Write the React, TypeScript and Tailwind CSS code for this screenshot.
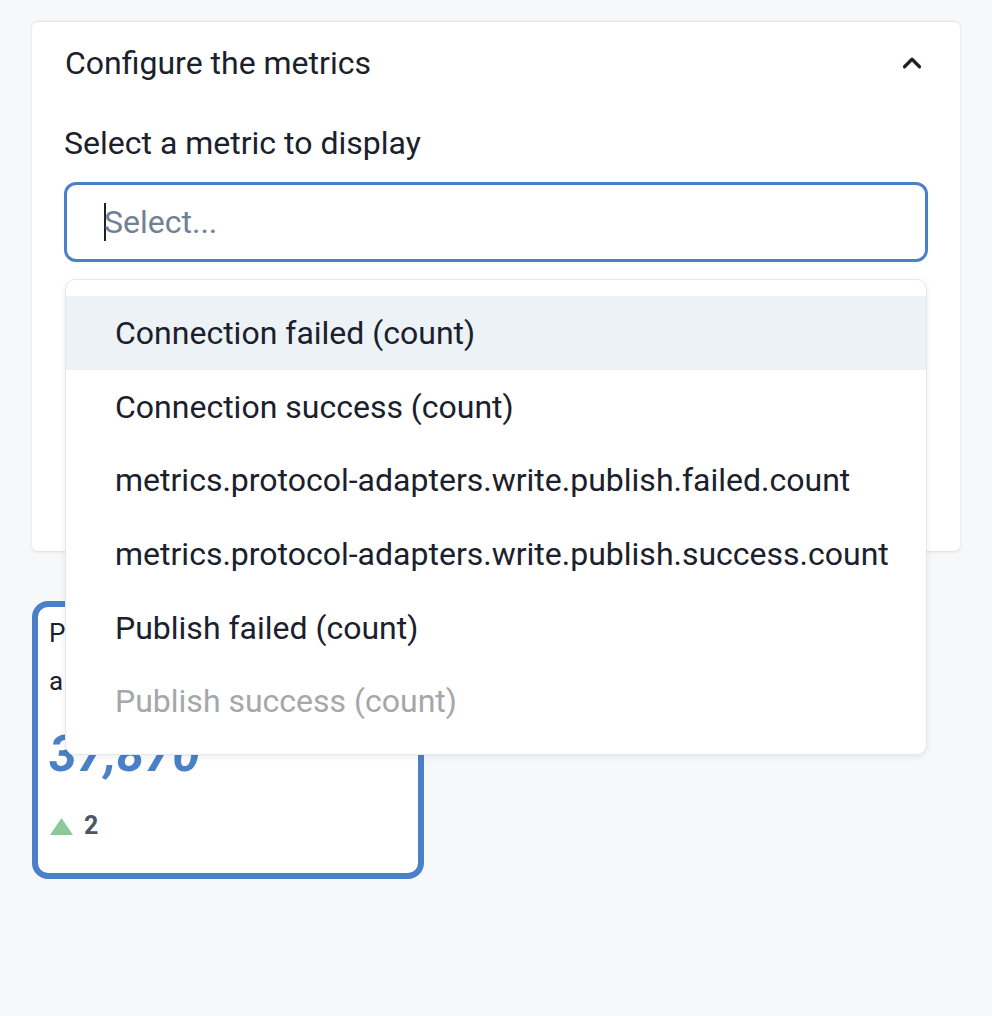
import { ChevronUp } from 'lucide-react'

const options = [
  { label: 'Connection failed (count)', active: true },
  { label: 'Connection success (count)' },
  { label: 'metrics.protocol-adapters.write.publish.failed.count' },
  { label: 'metrics.protocol-adapters.write.publish.success.count' },
  { label: 'Publish failed (count)' },
  { label: 'Publish success (count)', disabled: true },
]

export default function App() {
  return (
    <div
      className="min-h-screen bg-[#f7f8fa] px-[32px] pt-[21px] text-[#1a202c]"
      style={{ fontFamily: 'Roboto, "Liberation Sans", sans-serif' }}
    >
      {/* Configure card */}
      <div className="relative rounded-md border-t border-[#e2e8f0] bg-white shadow-[0_1px_3px_rgba(0,0,0,0.12)]">
        <div className="flex h-[82px] items-center justify-between px-[33px]">
          <span className="text-[32px]">Configure the metrics</span>
          <ChevronUp className="h-[30px] w-[30px] text-[#1a202c]" strokeWidth={2.6} />
        </div>
        <div className="px-[32px] pb-[32px]">
          <div className="mb-[15px] mt-[15px] flex h-[48px] items-center text-[32px]">Select a metric to display</div>
          <div className="flex h-[80px] items-center rounded-[12px] border-[3px] border-[#4a80c8] pl-[37px]">
            <span className="-mr-[2px] h-[38px] w-[2px] bg-[#1a202c]" />
            <span className="text-[32px] text-[#718096]">Select...</span>
          </div>
          <div className="h-[257px]" />

          {/* Dropdown menu */}
          <div className="absolute left-[33px] top-[257px] z-10 w-[862px] rounded-[10px] border border-[#e2e8f0] bg-white py-[16px] shadow-[0_2px_6px_rgba(0,0,0,0.08)]">
            {options.map((o) => (
              <div
                key={o.label}
                className={`flex h-[73.7px] items-center pl-[49px] text-[32px] ${
                  o.active ? 'bg-[#edf2f7]' : ''
                } ${o.disabled ? 'text-[#a5a7ab]' : 'text-[#1a202c]'}`}
              >
                {o.label}
              </div>
            ))}
          </div>
        </div>
      </div>

      {/* Metric card */}
      <div className="mt-[50px] h-[278px] w-[392px] rounded-[16px] border-[6px] border-[#4a80c8] bg-white px-[11px] pt-[2px]">
        <div className="text-[26px] leading-[48px] text-[#1a202c]">
          Publish success (count)
          <br />a modbus adapter
        </div>
        <div className="mt-[21px] text-[50px] font-bold italic leading-[56px] text-[#4a80c8]">37,870</div>
        <div className="mt-[27px] flex h-[34px] items-center gap-[11px] pl-[1px]">
          <svg width="23" height="17" viewBox="0 0 23 17">
            <path d="M11.5 0 L23 17 L0 17 Z" fill="#8cc99a" />
          </svg>
          <span className="text-[25px] font-bold text-[#4a5568]">2</span>
        </div>
      </div>
    </div>
  )
}
